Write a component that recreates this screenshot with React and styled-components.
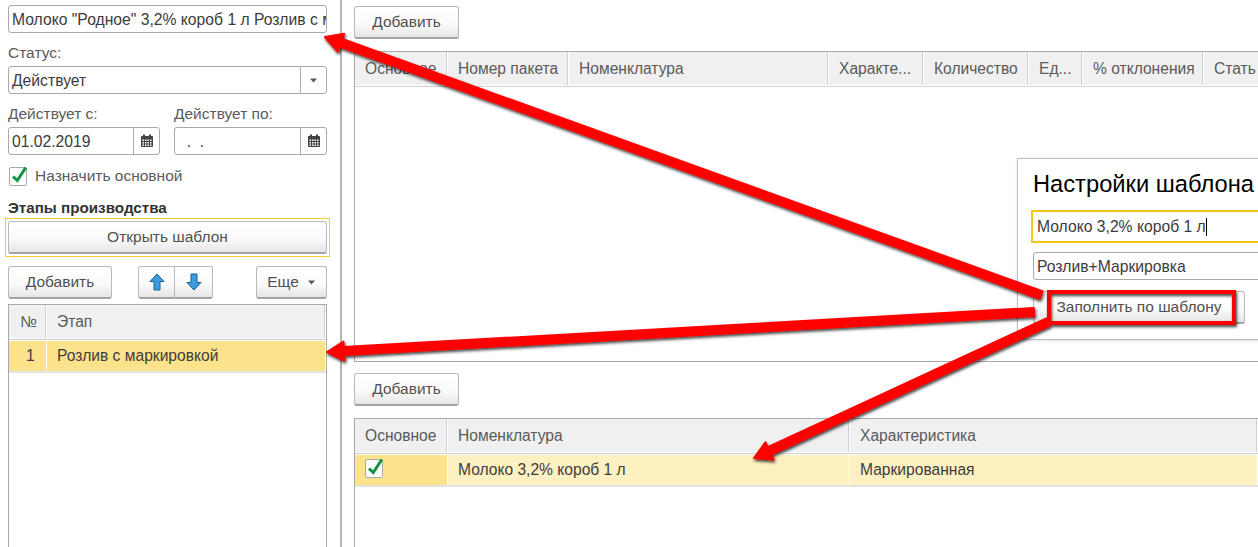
import React from "react";
import styled, { createGlobalStyle } from "styled-components";

const Global = createGlobalStyle`
  html, body { margin: 0; padding: 0; background: #fff; }
  body { font-family: "Liberation Sans", Arial, sans-serif; font-size: 15.5px; color: #4a4a4a; }
  * { box-sizing: border-box; }
`;

const Page = styled.div`
  position: relative; width: 1258px; height: 547px; overflow: hidden; display: flex; background: #fff;
`;
const Left = styled.aside`
  width: 342px; flex: none; height: 100%; padding: 5px 13px 0 8px; border-right: 2px solid #b4b4b4;
  display: flex; flex-direction: column;
`;
const Right = styled.main`
  flex: 1; min-width: 0; display: flex; flex-direction: column; padding: 6px 0 0 12px;
`;
const Field = styled.div`
  height: 28px; width: ${p => p.$w || "100%"}; flex: none; display: flex; align-items: stretch; background: #fff;
  border: 1px solid #a9a9a9; border-radius: 3px; overflow: hidden; font-size: 15.7px; color: #3c3c3c;
`;
const FieldText = styled.div`
  flex: 1; min-width: 0; padding: 1px 0 0 3px; line-height: 26px; white-space: nowrap; overflow: hidden;
`;
const FieldBtn = styled.div`
  width: 26px; flex: none; border-left: 1px solid #a9a9a9; display: flex; align-items: center; justify-content: center;
`;
const Label = styled.div`
  height: 17px; line-height: 17px; margin: ${p => p.$mt || 12}px 0 4px; color: #5b5b5b; font-size: 15.5px;
  position: relative; top: -1px;
`;
const DateRow = styled.div`display: flex; gap: 14px;`;
const DateCol = styled.div`width: ${p => p.$w}px; flex: none;`;
const CheckRow = styled.div`display: flex; align-items: center; gap: 8px; margin: 11px 0 0 1px; height: 21px; color: #5b5b5b;`;
const CheckBox = styled.div`
  width: 18px; height: 19px; border: 1px solid #a9a9a9; border-radius: 2px; background: #fff; position: relative; flex: none;
  svg { position: absolute; left: 0; top: -3px; }
`;
const Section = styled.div`font-weight: 700; color: #333; font-size: 15.2px; line-height: 17px; margin-top: 13px;`;
const Frame = styled.div`
  margin: 2px -3px 0; padding: 2px; border: 1px solid #f5cb3c; height: 40px; display: flex;
`;
const Button = styled.div`
  height: ${p => p.$h || 33}px; width: ${p => p.$w || "auto"}; flex: ${p => p.$w ? "none" : 1};
  display: flex; align-items: center; justify-content: center; gap: 8px; font-size: 15.5px; color: #505050;
  border: 1px solid #b9b9b9; border-bottom: 2px solid #a3a3a3; border-radius: 3px;
  background: linear-gradient(#ffffff 0%, #fbfbfb 55%, #e6e6e6 100%);
`;
const Toolbar = styled.div`display: flex; align-items: center; margin-top: 9px;`;
const Spacer = styled.div`flex: 1;`;
const ArrowGroup = styled.div`display: flex; margin-left: 26px;`;
const ArrowBtn = styled(Button)`
  border-radius: ${p => p.$first ? "3px 0 0 3px" : "0 3px 3px 0"};
  ${p => p.$first ? "" : "border-left: none;"}
`;
const Table = styled.div`
  border: 1px solid #a9a9a9; border-bottom: ${p => p.$open ? "none" : "1px solid #a9a9a9"};
  ${p => p.$right ? "border-right: none;" : ""}
  height: ${p => p.$h}px; margin-top: ${p => p.$mt || 0}px; flex: none; overflow: hidden; background: #fff;
`;
const HeadRow = styled.div`
  display: flex; height: 35px; padding-bottom: 1px; border-bottom: 1px solid #d0d0d0; background: #fff;
`;
const HeadCell = styled.div`
  width: ${p => p.$w}px; flex: ${p => p.$grow ? 1 : "none"}; background: #f0f0f0;
  border-right: 1px solid #fff; padding-left: ${p => p.$pl ?? 10}px; line-height: 33px; white-space: nowrap; overflow: hidden;
  box-shadow: inset -1px 0 0 #cfcfcf; color: #5a5a5a; font-size: 15.6px;
`;
const Row = styled.div`
  display: flex; height: 32px; margin-top: 1px; border-bottom: 2px solid #e3e3e3;
`;
const Cell = styled.div`
  width: ${p => p.$w}px; flex: ${p => p.$grow ? 1 : "none"}; background: ${p => p.$bg}; border-right: 1px solid #fff;
  padding-left: ${p => p.$pl ?? 10}px; line-height: 30px; white-space: nowrap; color: #3d3d3d; position: relative;
  font-size: 15.6px;
`;
const CellCheck = styled(CheckBox)`position: absolute; left: 10px; top: 4px; height: 19px;`;
const Popup = styled.div`
  position: absolute; left: 1017px; top: 158px; width: 300px; height: 182px; background: #fff;
  border: 1px solid #bdbdbd; padding: 12px 0 0 15px; display: flex; flex-direction: column;
  box-shadow: 0 1px 3px rgba(0,0,0,.12);
`;
const PopTitle = styled.div`font-size: 23.7px; line-height: 26px; color: #000; white-space: nowrap;`;
const PopInput = styled(Field)`
  width: 280px; height: 33px; margin: 13px 0 0 -2px; border: 2px solid #f5c518; border-radius: 0;
`;
const PopText = styled(FieldText)`line-height: 29px; padding: 0 0 0 4px;`;
const Caret = styled.span`display: inline-block; width: 1px; height: 18px; background: #000; vertical-align: -4px;`;
const PopSelect = styled(Field)`width: 280px; margin: 9px 0 0;`;
const PopButton = styled(Button)`margin: 11px 0 0;`;
const Overlay = styled.svg`position: absolute; left: 0; top: 0; pointer-events: none;`;

const Calendar = () => (
  <svg width="14" height="14" viewBox="0 0 14 14">
    <rect x="1" y="2" width="12" height="11" rx="1" fill="#444" />
    <rect x="3" y="0.5" width="2" height="3" fill="#444" /><rect x="9" y="0.5" width="2" height="3" fill="#444" />
    {[6, 8.5, 11].map(y => [2.5, 5, 7.5, 10].map(x => <rect key={x + "-" + y} x={x} y={y - 0.5} width="1.5" height="1.5" fill="#fff" />))}
  </svg>
);
const Tri = ({ c = "#555" }) => (
  <svg width="9" height="5" viewBox="0 0 9 5"><path d="M1 0.5h7L4.5 4.5z" fill={c} /></svg>
);
const Tick = () => (
  <svg width="18" height="20" viewBox="0 0 18 20">
    <path d="M3 11.5 L7.3 15.5 L15.8 2.5" fill="none" stroke="#0b9444" strokeWidth="3" />
  </svg>
);
const Blue = ({ down }) => (
  <svg width="16" height="18" viewBox="0 0 16 18" style={{ transform: down ? "scaleY(-1)" : "none" }}>
    <path d="M8 1 L15 8.5 H11 V17 H5 V8.5 H1 Z" fill="#3d9be0" stroke="#155f9c" strokeWidth="1" strokeLinejoin="round" />
  </svg>
);

const Arrow = ({ x1, y1, x2, y2, w = 8, hl = 17, hw = 19 }) => {
  const dx = x2 - x1, dy = y2 - y1, l = Math.hypot(dx, dy), ux = dx / l, uy = dy / l, nx = -uy, ny = ux;
  const bx = x2 - ux * hl, by = y2 - uy * hl;
  const p = [
    [x1 + nx * w / 2, y1 + ny * w / 2], [bx + nx * w / 2, by + ny * w / 2], [bx + nx * hw / 2, by + ny * hw / 2],
    [x2, y2],
    [bx - nx * hw / 2, by - ny * hw / 2], [bx - nx * w / 2, by - ny * w / 2], [x1 - nx * w / 2, y1 - ny * w / 2],
  ].map(a => a.join(",")).join(" ");
  return <polygon points={p} fill="#fe0000" strokeLinejoin="round" stroke="#fe0000" strokeWidth="2" />;
};

const topCols = [
  ["Основное", 93], ["Номер пакета", 121], ["Номенклатура", 260], ["Характе...", 95],
  ["Количество", 105], ["Ед...", 54], ["% отклонения", 121], ["Стать", 80],
];

export default function App() {
  return (
    <Page>
      <Global />
      <Left>
        <Field><FieldText>Молоко "Родное" 3,2% короб 1 л Розлив с маркировкой</FieldText></Field>
        <Label $mt={12}>Статус:</Label>
        <Field><FieldText>Действует</FieldText><FieldBtn><Tri /></FieldBtn></Field>
        <DateRow>
          <DateCol $w={152}>
            <Label>Действует с:</Label>
            <Field><FieldText>01.02.2019</FieldText><FieldBtn><Calendar /></FieldBtn></Field>
          </DateCol>
          <DateCol $w={153}>
            <Label>Действует по:</Label>
            <Field><FieldText>&nbsp;&nbsp;.&nbsp;&nbsp;.</FieldText><FieldBtn><Calendar /></FieldBtn></Field>
          </DateCol>
        </DateRow>
        <CheckRow><CheckBox><Tick /></CheckBox>Назначить основной</CheckRow>
        <Section>Этапы производства</Section>
        <Frame><Button>Открыть шаблон</Button></Frame>
        <Toolbar>
          <Button $w="104px">Добавить</Button>
          <ArrowGroup>
            <ArrowBtn $w="37px" $first><Blue /></ArrowBtn>
            <ArrowBtn $w="38px"><Blue down /></ArrowBtn>
          </ArrowGroup>
          <Spacer />
          <Button $w="71px">Еще <Tri /></Button>
        </Toolbar>
        <Table $open $h={243} $mt={5}>
          <HeadRow>
            <HeadCell $w={38} $pl={11}>№</HeadCell>
            <HeadCell $grow>Этап</HeadCell>
          </HeadRow>
          <Row>
            <Cell $w={38} $bg="#fde28c" $pl={17}>1</Cell>
            <Cell $grow $bg="#fde28c">Розлив с маркировкой</Cell>
          </Row>
        </Table>
      </Left>
      <Right>
        <Button $w="105px">Добавить</Button>
        <Table $right $h={311} $mt={12}>
          <HeadRow>
            {topCols.map(([t, w]) => <HeadCell key={t} $w={w}>{t}</HeadCell>)}
          </HeadRow>
        </Table>
        <Button $w="105px" style={{ marginTop: 11 }}>Добавить</Button>
        <Table $right $open $h={129} $mt={12}>
          <HeadRow>
            <HeadCell $w={93}>Основное</HeadCell>
            <HeadCell $w={402}>Номенклатура</HeadCell>
            <HeadCell $grow>Характеристика</HeadCell>
          </HeadRow>
          <Row>
            <Cell $w={93} $bg="#fde28c"><CellCheck><Tick /></CellCheck></Cell>
            <Cell $w={402} $bg="#fdf0c1">Молоко 3,2% короб 1 л</Cell>
            <Cell $grow $bg="#fdf0c1">Маркированная</Cell>
          </Row>
        </Table>
      </Right>
      <Popup>
        <PopTitle>Настройки шаблона</PopTitle>
        <PopInput><PopText>Молоко 3,2% короб 1 л<Caret /></PopText></PopInput>
        <PopSelect><FieldText>Розлив+Маркировка</FieldText></PopSelect>
        <PopButton $w="212px">Заполнить по шаблону</PopButton>
      </Popup>
      <Overlay width="1258" height="547" viewBox="0 0 1258 547">
        <defs>
          <filter id="sh" x="-5%" y="-5%" width="110%" height="110%">
            <feDropShadow dx="1" dy="2" stdDeviation="1.6" floodColor="#000" floodOpacity=".75" />
          </filter>
        </defs>
        <g filter="url(#sh)">
          <Arrow x1={1041} y1={295} x2={325} y2={37} />
          <Arrow x1={1034} y1={312} x2={327} y2={352} />
          <Arrow x1={1048} y1={322} x2={754} y2={458} />
          <rect x="1049" y="292" width="185" height="31" fill="none" stroke="#fe0000" strokeWidth="4" />
        </g>
      </Overlay>
    </Page>
  );
}
